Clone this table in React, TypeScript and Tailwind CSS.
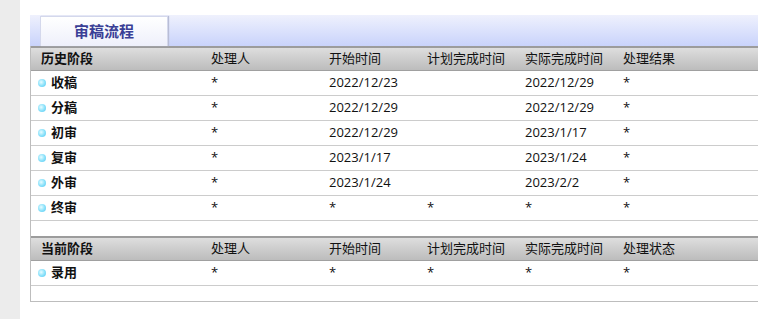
import React from 'react';

type Row = { stage: string; user: string; start: string; plan: string; done: string; result: string };

const history: Row[] = [
    { stage: '收稿', user: '*', start: '2022/12/23', plan: '', done: '2022/12/29', result: '*' },
    { stage: '分稿', user: '*', start: '2022/12/29', plan: '', done: '2022/12/29', result: '*' },
    { stage: '初审', user: '*', start: '2022/12/29', plan: '', done: '2023/1/17', result: '*' },
    { stage: '复审', user: '*', start: '2023/1/17', plan: '', done: '2023/1/24', result: '*' },
    { stage: '外审', user: '*', start: '2023/1/24', plan: '', done: '2023/2/2', result: '*' },
    { stage: '终审', user: '*', start: '*', plan: '*', done: '*', result: '*' },
];

const current: Row[] = [
    { stage: '录用', user: '*', start: '*', plan: '*', done: '*', result: '*' },
];

const cols = 'grid grid-cols-[180px_118px_98px_98px_98px_1fr] items-center';

const Dot: React.FC = () => (
    <span className="inline-block w-[8px] h-[8px] rounded-full mr-[5px] bg-[radial-gradient(circle_at_40%_40%,#e8fcff,#86e0fa_55%,#55c6f0)]" />
);

const Header: React.FC<{ title: string; last: string }> = ({ title, last }) => (
    <div className={`${cols} h-[25px] border-t-2 border-b border-t-[#9c9c9c] border-b-[#a0a0a0] bg-gradient-to-b from-[#dedede] to-[#bcbcbc] text-[13px] text-[#111]`}>
        <div className="pl-[10px] font-bold">{title}</div>
        <div>处理人</div>
        <div>开始时间</div>
        <div>计划完成时间</div>
        <div>实际完成时间</div>
        <div>{last}</div>
    </div>
);

const Line: React.FC<{ row: Row }> = ({ row }) => (
    <div className={`${cols} h-[25px] border-b border-[#cccccc] text-[13px] text-[#111]`}>
        <div className="pl-[7px] flex items-center font-bold">
            <Dot />
            {row.stage}
        </div>
        <div>{row.user}</div>
        <div>{row.start}</div>
        <div>{row.plan}</div>
        <div>{row.done}</div>
        <div>{row.result}</div>
    </div>
);

export default function App() {
    return (
        <div className="flex w-[758px] h-[319px] overflow-hidden bg-white font-['Open_Sans','Noto_Sans_CJK_SC',sans-serif]">
            <div className="w-[20px] shrink-0 bg-[#ececec]" />
            <div className="flex-1 pl-[10px] pt-[15px]">
                <div className="w-[760px]">
                    {/* tab strip */}
                    <div className="h-[31px] flex items-end pl-[10px] bg-gradient-to-b from-[#eff1fd] to-[#c9d3fb]">
                        <div className="w-[128px] h-[30px] flex items-center justify-center border border-b-0 border-[#d4d8ec] shadow-[1px_0_1px_#b8bdd6] bg-gradient-to-b from-[#ffffff] to-[#eef0fb] text-[15px] font-semibold text-[#3a3f96]">
                            审稿流程
                        </div>
                    </div>
                    <div className="border-l border-b border-[#bdbdbd]">
                        <Header title="历史阶段" last="处理结果" />
                        {history.map((r) => (
                            <Line key={r.stage} row={r} />
                        ))}
                        <div className="h-[15px]" />
                        <Header title="当前阶段" last="处理状态" />
                        {current.map((r) => (
                            <Line key={r.stage} row={r} />
                        ))}
                        <div className="h-[15px]" />
                    </div>
                </div>
            </div>
        </div>
    );
}
